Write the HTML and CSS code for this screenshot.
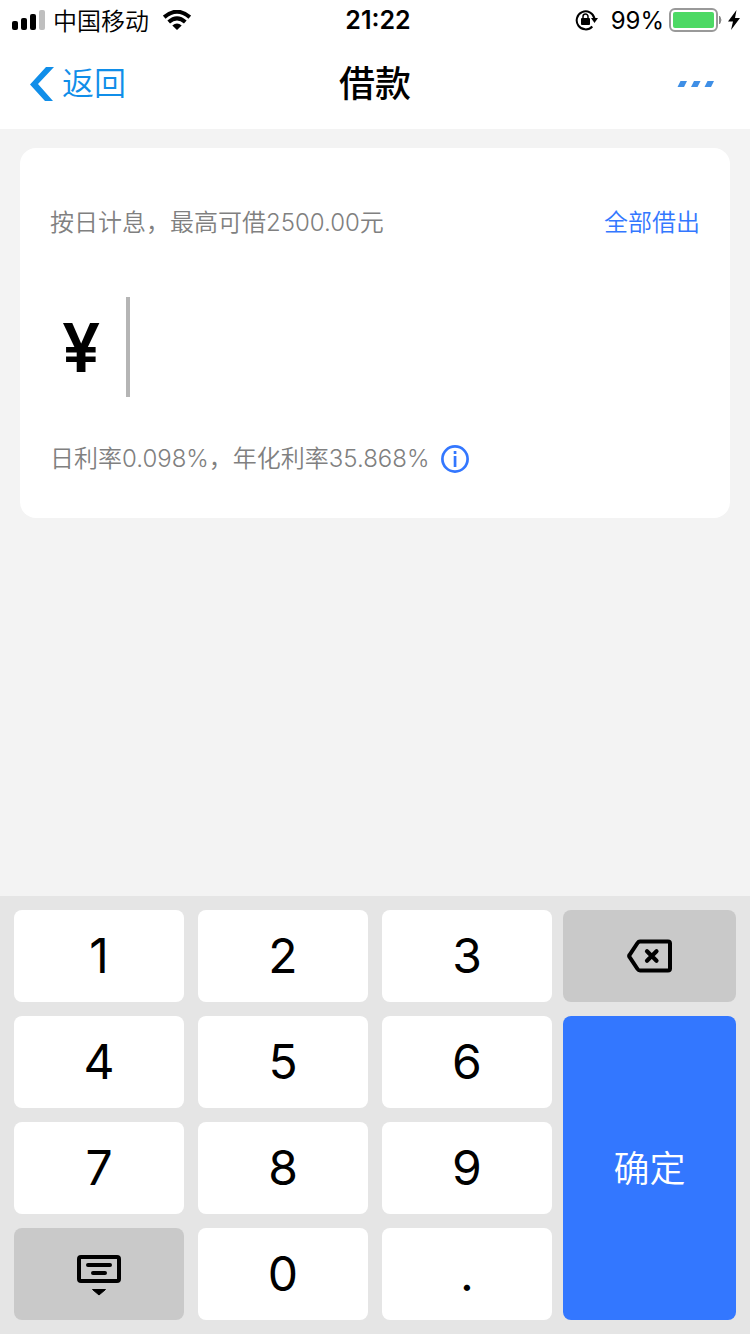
FILE: index.html
```html
<!DOCTYPE html>
<html lang="zh-CN">
<head>
<meta charset="utf-8">
<meta name="viewport" content="width=device-width, initial-scale=1">
<title>借款</title>
<link rel="stylesheet" href="styles.css">
</head>
<body class="page">
<div class="status">
  <div class="status-left">
    <svg class="signal" width="34" height="20" viewBox="0 0 34 20" aria-hidden="true">
      <rect x="0" y="11" width="6" height="9" rx="2"/><rect x="9" y="8" width="6" height="12" rx="2"/><rect x="18" y="4" width="6" height="16" rx="2"/><rect x="27" y="0" width="6" height="20" rx="2" fill="#bfbfbf"/>
    </svg>
    <span class="carrier">中国移动</span>
    <svg class="wifi" width="28" height="20" viewBox="0 0 28 20" aria-hidden="true">
      <path d="M1.200 7.200Q14-3.800 26.800 7.200M5.700 12Q14 4.600 22.300 12" fill="none" stroke="#000" stroke-width="4"/>
      <path d="M9.300 15.500Q14 11.600 18.700 15.500L14 20Z"/>
    </svg>
  </div>
  <time class="clock">21:22</time>
  <div class="status-right">
    <svg class="lock" width="24" height="22" viewBox="0 0 24 22" aria-hidden="true">
      <path d="M17.300 17.500A9 9 0 1 1 19.500 9.500" fill="none" stroke="#000" stroke-width="2"/>
      <path d="M16 9h7l-3.500 5Z"/>
      <rect x="6" y="9" width="9" height="7" rx="1"/>
      <path d="M8 10V7.500a2.500 2.500 0 0 1 5 0V10" fill="none" stroke="#000" stroke-width="1.500"/>
    </svg>
    <span>99%</span>
    <svg class="battery" width="54" height="24" viewBox="0 0 54 24" aria-hidden="true">
      <rect x="2" y="1" width="47" height="22" rx="5" fill="none" stroke="#999" stroke-width="2"/>
      <rect x="5" y="4" width="41" height="16" rx="2" fill="#4cd964"/>
      <path d="M51.500 8q3 4 0 8Z" fill="#888" stroke="#888"/>
    </svg>
    <svg class="bolt" width="12" height="20" viewBox="0 0 12 20" aria-hidden="true"><path d="M8.500 0 0 11.500h5L3 20l9-12H7Z"/></svg>
  </div>
</div>
<header class="nav">
  <a class="back" href="#">
    <svg width="24" height="36" viewBox="0 0 24 36" aria-hidden="true"><path d="M16 1h8L8 18 23 35h-8L0 18.500Z" fill="#108ee9"/></svg>
    <span>返回</span>
  </a>
  <h1 class="title">借款</h1>
  <button class="more" type="button" aria-label="更多">
    <svg width="38" height="8" viewBox="0 0 38 8" aria-hidden="true"><path d="M3.500 1h6.500L7 7H.5ZM17 1h6.500l-3 6H14ZM30.500 1H37l-3 6h-6.500Z" fill="#3f8fe6"/></svg>
  </button>
</header>
<main class="content">
  <section class="card">
    <div class="row">
      <label for="amount">按日计息，最高可借2500.00元</label>
      <button class="all" type="button">全部借出</button>
    </div>
    <div class="amount">
      <span class="currency">¥</span>
      <input class="amount-input" id="amount" type="text" inputmode="none">
    </div>
    <div class="rate">
      <span>日利率0.098%，年化利率35.868%</span>
      <button class="info" type="button" aria-label="利率说明">
        <svg width="28" height="28" viewBox="0 0 28 28" aria-hidden="true"><circle cx="14" cy="14" r="12.600" fill="none" stroke="#3377ff" stroke-width="2.700"/><path d="M12.700 6h2.700v3h-2.700ZM12.700 11h2.700v11h-2.700Z" fill="#3377ff"/></svg>
      </button>
    </div>
  </section>
</main>
<div class="keypad">
  <div class="digits">
    <button class="key" type="button">1</button>
    <button class="key" type="button">2</button>
    <button class="key" type="button">3</button>
    <button class="key" type="button">4</button>
    <button class="key" type="button">5</button>
    <button class="key" type="button">6</button>
    <button class="key" type="button">7</button>
    <button class="key" type="button">8</button>
    <button class="key" type="button">9</button>
    <button class="key key-gray" type="button" aria-label="收起键盘">
      <svg width="44" height="44" viewBox="0 0 44 44" aria-hidden="true"><rect x="2" y="5" width="40" height="24" rx="2" fill="none" stroke="#000" stroke-width="4"/><path d="M11 13h22M16 21h12" stroke="#000" stroke-width="4" stroke-linecap="round"/><path d="M15.500 37.500h13L22 43Z" stroke="#000" stroke-linejoin="round"/></svg>
    </button>
    <button class="key" type="button">0</button>
    <button class="key" type="button">.</button>
  </div>
  <div class="actions">
    <button class="key key-gray" type="button" aria-label="删除">
      <svg width="46" height="34" viewBox="0 0 46 34" aria-hidden="true"><path d="M13 2.500h28q2 0 2 2v25q0 2-2 2H13q-1.500 0-2.500-1.500L2.500 18q-.7-1 0-2L10.500 4Q11.500 2.500 13 2.500Z" fill="none" stroke="#000" stroke-width="4"/><path d="M20 12.200l9.500 9.500M29.500 12.200 20 21.700" stroke="#000" stroke-width="4.200" stroke-linecap="round"/></svg>
    </button>
    <button class="key key-confirm" type="button">确定</button>
  </div>
</div>
</body>
</html>
```
FILE: styles.css
```css
* {
  box-sizing: border-box;
}

.page {
  display: flex;
  flex-direction: column;
  min-height: 100vh;
  margin: 0;
  background: #f3f3f3;
  color: #000;
  font-family: Inter, "Noto Sans CJK SC", sans-serif;
  font-size: 24px;
}

button {
  padding: 0;
  border: 0;
  background: none;
  color: inherit;
  font: inherit;
}

svg {
  display: block;
  flex: none;
}

.status,
.nav {
  display: grid;
  grid-template-columns: 1fr auto 1fr;
  align-items: center;
  background: #fff;
}

.status {
  height: 40px;
  padding: 0 10px 0 12px;
}

.status-left,
.status-right {
  display: flex;
  align-items: center;
}

.status-left {
  gap: 7px;
}

.carrier {
  font-family: "Noto Sans CJK SC", sans-serif;
  font-weight: 350;
  line-height: 32px;
}

.wifi {
  margin-left: 7px;
}

.clock {
  padding-left: 4px;
  font-size: 25px;
  font-weight: 600;
}

.status-right {
  justify-content: flex-end;
}

.lock {
  margin-right: 12px;
}

.battery {
  margin: 0 6px 0 4px;
}

.nav {
  height: 89px;
  padding: 0 30px 2px;
}

.back {
  display: flex;
  align-items: center;
  gap: 8px;
  color: #108ee9;
  font-size: 32px;
  font-weight: 350;
  line-height: 40px;
  text-decoration: none;
}

.title {
  margin: 0;
  font-size: 36px;
  font-weight: 500;
  line-height: 40px;
}

.more {
  justify-self: end;
  margin-right: 5px;
}

.content {
  padding: 19px 20px;
}

.card {
  padding: 57px 30px 41px;
  border-radius: 16px;
  background: #fff;
  color: #808080;
  font-weight: 350;
}

.row {
  display: flex;
  justify-content: space-between;
  line-height: 36px;
}

.all {
  color: #3377ff;
}

.amount {
  display: flex;
  align-items: center;
  gap: 26px;
  margin: 56px 0 44px;
  padding-left: 12px;
}

.currency {
  color: #000;
  font-size: 68px;
  font-weight: 600;
  line-height: 100px;
}

.amount-input {
  flex: 1;
  min-width: 0;
  height: 100px;
  padding: 0 12px;
  border: 0;
  border-left: 4px solid #b5b5b5;
  outline: 0;
  background: none;
  font: inherit;
  font-size: 64px;
}

.rate {
  display: flex;
  align-items: center;
  gap: 12px;
  line-height: 36px;
}

.keypad {
  display: flex;
  gap: 11px;
  margin-top: auto;
  padding: 14px;
  background: #e5e5e5;
}

.digits {
  display: grid;
  flex: 538;
  grid-template-columns: repeat(3, 1fr);
  gap: 14px;
}

.actions {
  display: flex;
  flex: 173;
  flex-direction: column;
  gap: 14px;
}

.key {
  display: flex;
  align-items: center;
  justify-content: center;
  height: 92px;
  padding-bottom: 2px;
  border-radius: 8px;
  background: #fff;
  font-size: 48px;
}

.key-gray {
  padding-bottom: 0;
  background: #c9c9c9;
}

.key-confirm {
  flex: 1;
  padding-bottom: 4px;
  background: #3377ff;
  color: #fff;
  font-size: 36px;
  font-weight: 350;
}
```
